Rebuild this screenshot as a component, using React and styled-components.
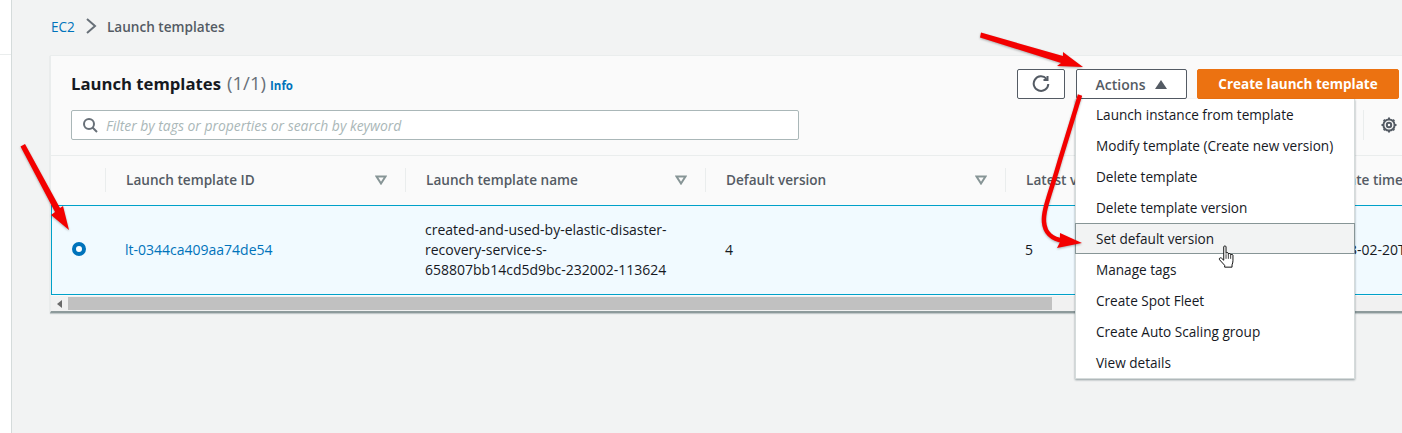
import React from "react";
import styled, { createGlobalStyle } from "styled-components";

const GlobalStyle = createGlobalStyle`
  html, body {
    margin: 0;
    padding: 0;
    width: 1402px;
    height: 433px;
    overflow: hidden;
    background: #f2f3f3;
    font-family: "Open Sans", "Liberation Sans", sans-serif;
    color: #16191f;
  }
  * { box-sizing: border-box; }
`;

const Page = styled.div`
  position: relative;
  display: flex;
  width: 1402px;
  height: 433px;
  overflow: hidden;
`;

const SideStrip = styled.div`
  flex: 0 0 12px;
  background: #fff;
  border-right: 1px solid #d5dbdb;
`;

const StripHead = styled.div`
  height: 55px;
  border-bottom: 1px solid #eaeded;
`;

const Main = styled.div`
  flex: none;
  width: 1408px;
  padding: 16px 0 0 38px;
`;

const Breadcrumbs = styled.nav`
  display: flex;
  align-items: center;
  height: 20px;
  margin: 0 0 19px 1px;
  font-size: 13.6px;
`;

const Crumb = styled.span`
  color: ${(props) => (props.$link ? "#0073bb" : "#545b64")};
  font-weight: ${(props) => (props.$link ? 400 : 600)};
`;

const CrumbSep = styled.svg`
  width: 12px;
  height: 16px;
  margin: 0 10px 0 10px;
  fill: none;
  stroke: #687078;
  stroke-width: 2;
`;

const Panel = styled.section`
  width: 1370px;
  height: 258px;
  background: #fafafa;
  border: 1px solid #eaeded;
  border-bottom: 2px solid #8d9a9b;
  box-shadow: 0 1px 1px rgba(0, 28, 36, 0.2);
`;

const PanelHeader = styled.header`
  height: 100px;
  padding: 13px 20px 0 20px;
  border-bottom: 1px solid #eaeded;
`;

const TitleRow = styled.div`
  display: flex;
  align-items: center;
  justify-content: space-between;
  height: 30px;
`;

const Title = styled.h1`
  margin: 0;
  font-size: 16.7px;
  font-weight: 700;
  line-height: 30px;
  color: #16191f;
`;

const Count = styled.span`
  font-size: 18.6px;
  font-weight: 400;
  color: #687078;
  margin-left: 6px;
`;

const InfoLink = styled.a`
  margin-left: 4px;
  font-size: 11.5px;
  font-weight: 700;
  color: #0073bb;
`;

const Toolbar = styled.div`
  display: flex;
  align-items: center;
`;

const IconButton = styled.button`
  display: flex;
  align-items: center;
  justify-content: center;
  width: 48px;
  height: 30px;
  padding: 0;
  background: #fff;
  border: 1px solid #545b64;
  border-radius: 2px;
`;

const MenuAnchor = styled.div`
  position: relative;
  margin: 0 10px 0 11px;
`;

const ActionsButton = styled.button`
  display: flex;
  align-items: center;
  justify-content: center;
  gap: 10px;
  width: 111px;
  height: 30px;
  padding: 0;
  background: #fff;
  border: 1px solid #545b64;
  border-radius: 2px;
  font: 600 14px "Open Sans", sans-serif;
  color: #545b64;
`;

const PrimaryButton = styled.button`
  width: 202px;
  height: 30px;
  padding: 0;
  background: #ec7211;
  border: 1px solid #ec7211;
  border-radius: 2px;
  font: 700 13.5px "Open Sans", sans-serif;
  color: #fff;
`;

const Menu = styled.ul`
  position: absolute;
  z-index: 2;
  top: 30px;
  left: -1px;
  width: 280px;
  margin: 0;
  padding: 0;
  list-style: none;
  background: #fff;
  border: 1px solid #d5dbdb;
  border-top: none;
  box-shadow: 0 1px 2px rgba(0, 28, 36, 0.4);
`;

const MenuItem = styled.li`
  height: 31px;
  margin: 0 -1px;
  padding-left: 20px;
  font-size: 13.6px;
  line-height: 29px;
  color: #16191f;
  background: ${(props) => (props.$active ? "#f2f3f3" : "transparent")};
  border: 1px solid ${(props) => (props.$active ? "#879596" : "transparent")};
`;

const SearchRow = styled.div`
  display: flex;
  align-items: center;
  justify-content: space-between;
  margin-top: 11px;
`;

const SearchBox = styled.div`
  display: flex;
  align-items: center;
  gap: 8px;
  width: 728px;
  height: 30px;
  padding-left: 10px;
  background: #fff;
  border: 1px solid #aab7b8;
  border-radius: 2px;
`;

const Placeholder = styled.span`
  font-size: 13.9px;
  font-style: italic;
  color: #aab7b8;
`;

const Prefs = styled.div`
  display: flex;
  align-items: center;
  height: 30px;
  margin-right: 2px;
  padding-left: 17px;
  border-left: 1px solid #eaeded;
`;

const HeadRow = styled.div`
  display: grid;
  grid-template-columns: 54px 300px 300px 300px 300px 300px;
  align-items: center;
  height: 49px;
  padding-bottom: 2px;
  background: #fafafa;
`;

const HeadCell = styled.div`
  display: flex;
  align-items: center;
  justify-content: space-between;
  height: 24px;
  padding: 0 18px 0 20px;
  font-size: 13.6px;
  font-weight: 600;
  color: #545b64;
  white-space: nowrap;
  border-left: 1px solid #eaeded;
`;

const DataRow = styled.div`
  display: grid;
  grid-template-columns: 53px 300px 300px 300px 300px 300px;
  align-items: center;
  height: 90px;
  background: #f1faff;
  border: 1px solid #00a1c9;
`;

const DataCell = styled.div`
  padding-left: 20px;
  font-size: 14px;
  line-height: 20px;
  color: ${(props) => (props.$link ? "#0073bb" : "#16191f")};
  white-space: nowrap;
`;

const RadioCell = styled.div`
  display: flex;
  justify-content: center;
  margin-top: -2px;
`;

const Radio = styled.span`
  width: 14px;
  height: 14px;
  border: 4px solid #0073bb;
  border-radius: 50%;
  background: #fff;
`;

const ScrollBar = styled.div`
  display: flex;
  align-items: center;
  height: 15px;
  margin-top: 1px;
  background: #f1f1f1;
`;

const ScrollArrow = styled.span`
  flex: 0 0 17px;
  display: flex;
  justify-content: center;
`;

const ScrollThumb = styled.div`
  width: 984px;
  height: 13px;
  background: #c1c1c1;
`;

const Overlay = styled.svg`
  position: absolute;
  z-index: 3;
  top: 0;
  left: 0;
  width: 1402px;
  height: 433px;
  pointer-events: none;
  filter: drop-shadow(0 1px 1px rgba(0, 0, 0, 0.3));
`;

const Cursor = styled.svg`
  position: absolute;
  z-index: 4;
  top: 245px;
  left: 1217px;
  width: 19px;
  height: 24px;
`;

const menuItems = [
  "Launch instance from template",
  "Modify template (Create new version)",
  "Delete template",
  "Delete template version",
  "Set default version",
  "Manage tags",
  "Create Spot Fleet",
  "Create Auto Scaling group",
  "View details",
];

const columns = [
  { title: "Launch template ID", filter: true },
  { title: "Launch template name", filter: true },
  { title: "Default version", filter: true },
  { title: "Latest version", filter: true },
  { title: "Create time" },
];

const FilterCaret = () => (
  <svg width="12" height="10" viewBox="0 0 12 10" fill="none" stroke="#879596" strokeWidth="2">
    <path d="M1.5 1.5h9L6 8.5z" />
  </svg>
);

const SearchIcon = () => (
  <svg width="16" height="16" viewBox="0 0 16 16" fill="none" stroke="#687078" strokeWidth="2">
    <circle cx="7" cy="7" r="5" />
    <path d="M10.5 10.5L15 15" />
  </svg>
);

const RefreshIcon = () => (
  <svg width="18" height="18" viewBox="0 0 18 18" fill="none" stroke="#545b64" strokeWidth="2">
    <path d="M14.5 3.8A7.3 7.3 0 1 0 16.3 9" />
    <path d="M15.5 1v4h-4" />
  </svg>
);

const GearIcon = () => (
  <svg width="16" height="16" viewBox="0 0 16 16" fill="none" stroke="#545b64">
    <circle cx="8" cy="8" r="2.2" strokeWidth="2" />
    <circle cx="8" cy="8" r="5.6" strokeWidth="2" />
    <path
      d="M8 .5v2M8 13.5v2M.5 8h2M13.5 8h2M2.7 2.7l1.4 1.4M11.900 11.900l1.4 1.4M2.7 13.300l1.4-1.4M11.900 4.100l1.4-1.4"
      strokeWidth="2"
    />
  </svg>
);

// the red annotation arrows sit over the whole page
const Arrows = () => (
  <Overlay viewBox="0 0 1402 433">
    <g fill="#f30000" stroke="none">
      <path d="M981 32.500L1063 56L1063 52L1083 67L1057 66L1061 63L980 37.500z" />
      <path d="M20.500 146.500L25 144L60 208L63 206L69 230L51 215L55 212z" />
      <path d="M1060 233L1082 243L1057 248L1060 242z" />
    </g>
    <path
      d="M1080 95L1060 160C1050 195 1043 210 1044 222C1045 234 1052 239 1064 241"
      fill="none"
      stroke="#f30000"
      strokeWidth="4.500"
    />
  </Overlay>
);

const HandCursor = () => (
  <Cursor viewBox="0 0 20 26">
    <path
      d="M7 2c0-1.300 2.500-1.300 2.500 0v7c0-1 2.500-1 2.500 0v1c0-1 2.500-1 2.500 0v1c0-1 2.500-1 2.500 0v6c0 2-.5 3-1 4.500v2.500H8v-2L2.500 16c-1-1.300.5-2.800 2-1.800L7 16.500z"
      fill="#fff"
      stroke="#000"
      strokeWidth="1"
      strokeLinejoin="round"
    />
    <path d="M9.500 10v5M12 10v5M14.500 11v4" stroke="#000" strokeWidth="0.8" fill="none" />
  </Cursor>
);

const App = () => (
  <Page>
    <GlobalStyle />
    <SideStrip>
      <StripHead />
    </SideStrip>
    <Main>
      <Breadcrumbs>
        <Crumb $link>EC2</Crumb>
        <CrumbSep viewBox="0 0 12 16">
          <path d="M2 1L10 8l-8 7" />
        </CrumbSep>
        <Crumb>Launch templates</Crumb>
      </Breadcrumbs>
      <Panel>
        <PanelHeader>
          <TitleRow>
            <Title>
              Launch templates<Count>(1/1)</Count>
              <InfoLink>Info</InfoLink>
            </Title>
            <Toolbar>
              <IconButton>
                <RefreshIcon />
              </IconButton>
              <MenuAnchor>
                <ActionsButton>
                  Actions
                  <svg width="12" height="9" viewBox="0 0 12 9">
                    <path d="M6 0l6 9H0z" fill="#545b64" />
                  </svg>
                </ActionsButton>
                <Menu>
                  {menuItems.map((item) => (
                    <MenuItem key={item} $active={item === "Set default version"}>
                      {item}
                    </MenuItem>
                  ))}
                </Menu>
              </MenuAnchor>
              <PrimaryButton>Create launch template</PrimaryButton>
            </Toolbar>
          </TitleRow>
          <SearchRow>
            <SearchBox>
              <SearchIcon />
              <Placeholder>Filter by tags or properties or search by keyword</Placeholder>
            </SearchBox>
            <Prefs>
              <GearIcon />
            </Prefs>
          </SearchRow>
        </PanelHeader>
        <HeadRow>
          <span />
          {columns.map((col) => (
            <HeadCell key={col.title}>
              {col.title}
              {col.filter && <FilterCaret />}
            </HeadCell>
          ))}
        </HeadRow>
        <DataRow>
          <RadioCell>
            <Radio />
          </RadioCell>
          <DataCell $link>lt-0344ca409aa74de54</DataCell>
          <DataCell>
            created-and-used-by-elastic-disaster-
            <br />
            recovery-service-s-
            <br />
            658807bb14cd5d9bc-232002-113624
          </DataCell>
          <DataCell>4</DataCell>
          <DataCell>5</DataCell>
          <DataCell>2023-02-20T11:36:24</DataCell>
        </DataRow>
        <ScrollBar>
          <ScrollArrow>
            <svg width="6" height="8" viewBox="0 0 6 8">
              <path d="M5 0v8L0 4z" fill="#6b6b6b" />
            </svg>
          </ScrollArrow>
          <ScrollThumb />
        </ScrollBar>
      </Panel>
    </Main>
    <Arrows />
    <HandCursor />
  </Page>
);

export default App;
